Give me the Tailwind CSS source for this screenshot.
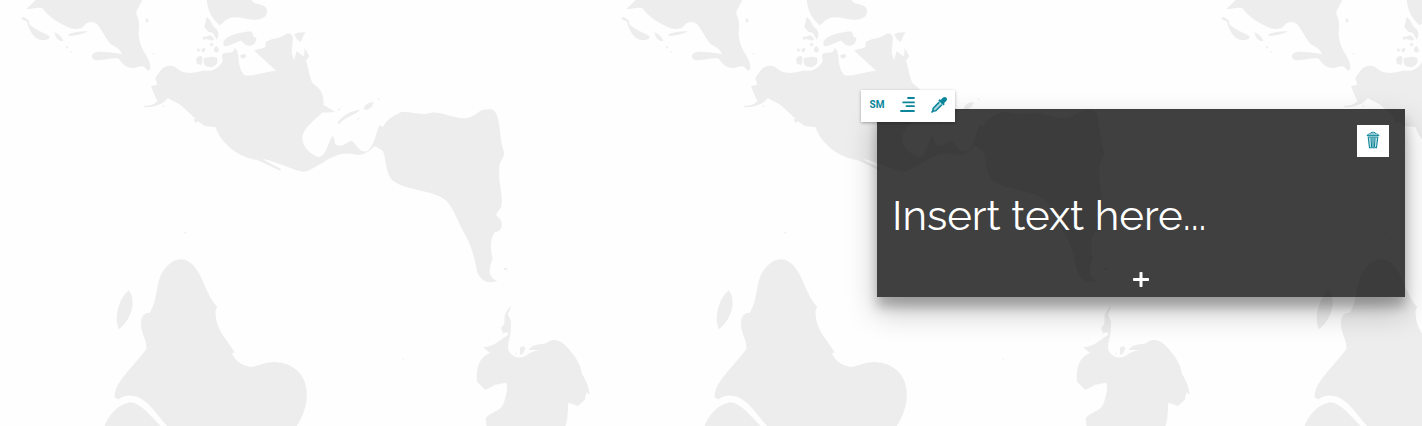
<!DOCTYPE html>
<html lang="en">
<head>
<meta charset="utf-8">
<meta name="viewport" content="width=device-width, initial-scale=1">
<title>Slide editor</title>
<script src="https://cdn.jsdelivr.net/npm/@tailwindcss/browser@4"></script>
</head>
<body class="relative min-h-screen overflow-x-hidden bg-[#fefefe] font-['Raleway','Lato',sans-serif]">
<!-- Tiled world map -->
<svg class="absolute inset-0 -z-10 h-full w-full" aria-hidden="true">
  <defs>
    <pattern id="map" width="600" height="600" patternUnits="userSpaceOnUse">
      <g transform="scale(.33333)" fill="#ededed">
        <path d="M107 0L80 26C95 30 110 20 127 25C150 55 180 72 210 84C230 90 245 86 252 78C262 64 280 62 293 74C312 100 318 118 334 134C350 140 362 150 366 162C340 160 315 154 290 156C272 160 270 178 288 181C312 182 335 172 356 176C366 188 372 203 402 204C414 200 425 196 433 201L445 213L451 205C452 188 444 176 436 162C424 142 414 115 416 95C420 75 416 55 409 42C407 32 418 20 427 0Z"/>
        <path d="M64 57Q68 47 76 54L88 62L86 69C98 88 128 94 150 110C146 122 122 124 110 115C96 106 86 86 80 64ZM164 97C174 100 186 112 190 122C178 126 166 116 164 97ZM205 103C222 97 242 93 263 94C252 102 230 107 207 108ZM200 138l5 4-3 4-5-3ZM213 152l3 3-2 3-3-3ZM437 56q8-2 9 7-5 8-9 2ZM458 159l6 1-4 5Z"/>
        <path d="M432 317C448 318 468 312 472 302L462 282L453 258L472 254L466 234L480 214C494 193 520 194 532 206C550 224 590 220 612 211C638 218 660 200 668 183L666 165C676 153 695 164 702 151L704 145C715 148 710 160 716 166C714 190 722 216 734 226C760 230 790 215 828 212L763 152C770 146 790 147 796 140L798 125C818 113 840 117 858 102C872 94 882 110 878 124L875 158L882 180L890 154L912 170L914 144L928 168L918 182C928 212 928 235 940 252C958 262 974 282 970 314L1006 336L966 338C938 365 916 380 908 406C902 438 934 466 956 471C982 469 984 418 999 408C1008 420 998 437 1020 437C1034 437 1044 424 1056 422C1076 440 1078 458 1101 454C1122 440 1126 405 1138 376L1150 381C1158 357 1185 347 1202 337C1240 333 1255 350 1300 337C1340 340 1364 358 1401 354C1432 350 1432 325 1468 328C1504 326 1495 400 1510 450C1520 472 1495 480 1498 510C1494 550 1514 600 1502 624L1488 644L1502 660C1512 678 1500 698 1484 696C1468 725 1472 752 1478 776C1468 802 1460 830 1492 842C1470 850 1450 850 1432 818C1424 775 1414 735 1394 702C1370 660 1360 620 1336 600C1300 570 1220 572 1180 543C1154 520 1160 474 1148 452L1125 438C1108 452 1092 468 1068 464C1020 452 990 476 960 493C940 504 925 515 910 515C870 508 830 484 786 476L844 508L840 512L772 480C715 474 660 427 647 382L614 378C592 364 574 343 554 326C538 308 520 306 504 294C488 314 460 324 432 321Z"/>
        <path d="M620 0C624 28 628 46 658 76C676 68 670 56 704 52C738 52 758 67 790 53C806 44 804 22 790 17C775 10 764 14 754 0ZM620 50C636 62 632 74 650 88C658 98 656 110 650 119L638 98L626 96L613 82ZM670 124C684 104 720 98 750 94C765 98 750 106 769 114C770 134 752 142 736 134L724 122C705 126 690 140 671 138ZM720 166l14-5 6 7-8 8-9-2ZM883 104C890 96 903 98 916 96L902 126L892 119ZM608 112l24-6 12 12-10 4-12-5-12 2ZM590 148l6-4 4 8-6 4ZM604 149c6-8 13-6 12 2-4 8-10 8-12-2ZM628 132l8-4 5 6-7 6ZM644 142l7-4 7 14-8 6-9-4ZM592 170l12-2 4 9-4 18-13-3-3-12ZM612 175c12-4 28-8 39-2 6 15-4 26-18 29-16 0-26-8-21-27Z"/>
        <path d="M487 316l7 1-5 5ZM583 356l8 2 4 6-7 5-6-6ZM1014 328l5-3 2 4-6 3ZM1012 368C1028 346 1052 332 1080 329C1070 344 1038 348 1018 372ZM1090 326C1097 311 1108 305 1122 307L1114 322L1100 331ZM1132 294l8 3-5 3ZM1070 357l10-3-5 5ZM1513 803l10 2-3 5-8-1Z"/>
        <g transform="translate(240 660)"><path d="M147 211C170 245 155 298 117 328C102 295 115 235 147 211ZM312 37l7-1-3 6ZM104 533C99 490 160 440 200 386C200 355 180 335 183 305C185 285 195 278 210 278C235 235 225 190 250 152C275 115 312 105 340 136C370 170 376 215 404 252L412 262L407 270C404 325 435 350 464 397L456 401C470 428 492 438 516 441C540 436 556 426 585 426C690 432 705 540 648 622V660H290L264 620C236 592 222 565 196 545C170 524 140 520 116 538ZM71 626C86 580 118 552 150 547C184 550 205 582 242 618V660H71Z"/></g>
        <g transform="translate(1320 660)"><path d="M214 257L204 282L213 304L212 332C212 352 200 373 206 392C224 420 250 416 268 400C280 394 292 391 300 390L266 390C275 372 305 374 320 369C338 353 359 362 374 374C400 400 423 430 426 462C438 480 446 498 449 525L440 517L434 540L414 558L385 548L382 598L376 620H140L137 595C148 578 180 575 190 553C197 530 206 505 198 488L166 494L136 510L111 485C108 445 115 414 150 399L129 381C160 382 180 359 205 344L202 335L189 340L183 323L193 312L194 286C200 272 205 264 214 257ZM240 384C246 377 254 376 256 386L248 402L240 404ZM226 398l5-1-3 7Z"/></g>
        <path d="M1208 1074l5 1-3 5Z"/>
      </g>
    </pattern>
  </defs>
  <rect width="100%" height="100%" fill="url(#map)"/>
</svg>

<main class="flex justify-end pt-[109px] pr-[17px] pb-8 pl-4">
  <section class="relative flex w-[528px] max-w-full flex-col bg-black/75 shadow-[0_14px_28px_rgba(0,0,0,0.25),0_10px_10px_rgba(0,0,0,0.22)]">
    <div role="toolbar" aria-label="Text block options" class="absolute -top-[19px] -left-4 flex h-8 bg-white px-px text-[#0a8599] shadow-[0_1px_3px_rgba(0,0,0,0.3)]">
      <button type="button" aria-label="Size: small" class="flex h-8 w-[30px] items-center justify-center pb-0.5 font-['Roboto',sans-serif] text-[10px] leading-4 font-bold">SM</button>
      <button type="button" aria-label="Align right" class="flex h-8 w-8 items-center justify-center pb-0.5">
        <svg class="size-4" viewBox="0 0 16 16" fill="none" stroke="currentColor" stroke-width="1.800" stroke-linecap="round" aria-hidden="true"><path d="M8 1H14M3.200 5.400H14M6.500 9.200H14M1 14H14"/></svg>
      </button>
      <button type="button" aria-label="Pick colour" class="flex h-8 w-[30px] items-center justify-center pb-0.5">
        <svg class="size-4" viewBox="0 0 16 16" fill="currentColor" aria-hidden="true"><path d="M9.600 3 11.800.8C13 -.3 14.600 -.2 15.400.7 16.300 1.600 16.200 3 15.200 4L13 6.200 13.900 7.100 12.400 8.600 7.300 3.500 8.800 2Z"/><path fill-opacity=".35" d="M8.200 5.100 2.200 11.200 1.800 14.100 4.800 13.700 10.900 7.700Z"/><path d="M8.200 5.100 2.200 11.200 1.800 14.100 4.800 13.700 10.900 7.700" fill="none" stroke="currentColor" stroke-width="1.500" stroke-linejoin="round"/><path d="M.3 14.400 1.400 13 3 14.600 1.500 15.700Q.8 16 .3 15.400Z"/></svg>
      </button>
    </div>

    <div class="flex justify-end px-4 pt-4">
      <button type="button" aria-label="Delete block" class="flex size-8 items-center justify-center bg-white pb-0.5 text-[#0a8599]">
        <svg class="h-[18px] w-3.5" viewBox="0 0 14 18" fill="none" stroke="currentColor" aria-hidden="true"><path d="M1 4.500Q1.500 3 3.500 3H10.500Q12.500 3 13 4.500ZM4 2.800Q4.300 1.200 7 1.200T10 2.800" stroke-width=".9"/><path fill="currentColor" fill-opacity=".25" d="M2.200 6 3.500 16.800H10.500L11.800 6Z" stroke-width="1.100"/><path d="M5 6.500 5.600 16M7 6.500V16M9 6.500 8.400 16" stroke-width="1"/></svg>
      </button>
    </div>

    <div class="mt-[31px] px-[15px]">
      <input type="text" aria-label="Block text" placeholder="Insert text here..." class="block h-[54px] w-full bg-transparent text-[42px] text-white outline-none placeholder:text-white">
    </div>

    <button type="button" aria-label="Add block" class="mx-auto mt-[21px] flex h-[34px] w-8 items-center justify-center text-white">
      <svg class="size-4" viewBox="0 0 16 16" fill="currentColor" aria-hidden="true"><rect x="6.500" width="3" height="15" rx=".8"/><rect y="6" width="16" height="3" rx=".8"/></svg>
    </button>
  </section>
</main>
</body>
</html>
